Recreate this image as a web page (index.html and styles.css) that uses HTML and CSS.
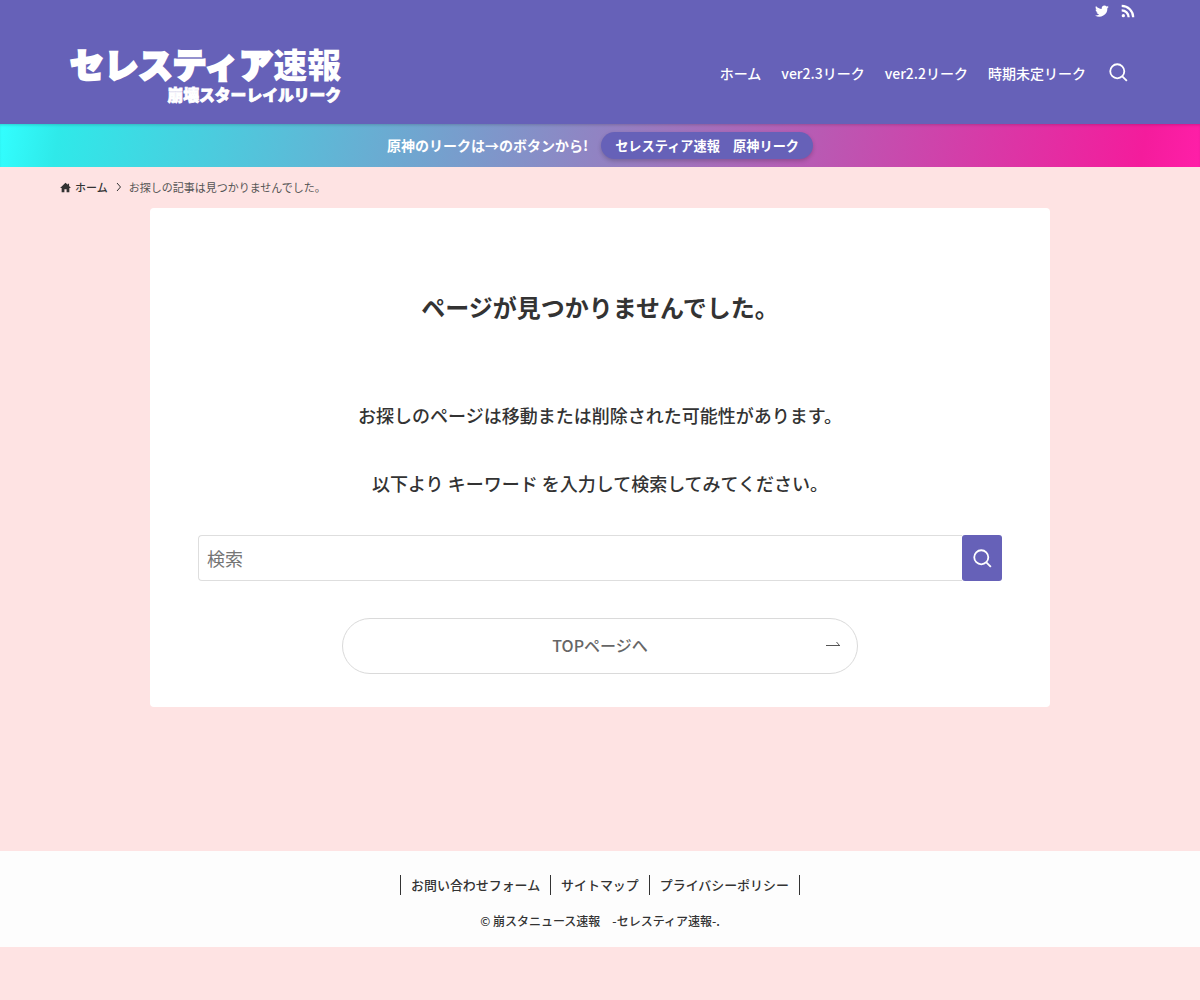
FILE: index.html
```
<!DOCTYPE html>
<html lang="ja">
<head>
    <meta charset="UTF-8">
    <meta name="viewport" content="width=device-width, initial-scale=1.0">
    <title>ページが見つかりませんでした。 | セレスティア速報</title>
    <link rel="stylesheet" href="styles.css">
</head>
<body>

    <header class="header">
        <div class="header-bar">
            <a href="#" aria-label="Twitter">
                <svg class="icon-sns" viewBox="0 0 24 24"><path d="M23.6 4.9c-.9.4-1.800.7-2.800.8 1-.6 1.800-1.600 2.100-2.700-.9.6-2 1-3.100 1.200A4.800 4.800 0 0 0 11.600 8.600C7.600 8.400 4 6.500 1.700 3.500c-1.300 2.200-.7 5.100 1.500 6.500-.8 0-1.500-.2-2.200-.6 0 2.300 1.600 4.300 3.900 4.800-.7.2-1.500.2-2.200.1.600 1.900 2.400 3.300 4.500 3.400A9.800 9.800 0 0 1 0 19.700 13.900 13.900 0 0 0 21.200 7.400c1-.7 1.800-1.500 2.400-2.500z"/></svg>
            </a>
            <a href="#" aria-label="RSS">
                <svg class="icon-sns" viewBox="0 0 24 24"><circle cx="4" cy="20" r="2.800"/><path d="M1.200 9v3.800a10 10 0 0 1 10 10H15A13.800 13.800 0 0 0 1.200 9z"/><path d="M1.200 1.200V5a17.800 17.800 0 0 1 17.800 17.800h3.800A21.600 21.600 0 0 0 1.200 1.200z"/></svg>
            </a>
        </div>
        <div class="header-inner">
            <a href="#" class="logo">
                <span class="logo-main"><span class="logo-kana">セレスティア</span>速報</span>
                <span class="logo-sub">崩壊スターレイルリーク</span>
            </a>
            <nav class="gnav">
                <a href="#">ホーム</a>
                <a href="#">ver2.3リーク</a>
                <a href="#">ver2.2リーク</a>
                <a href="#">時期未定リーク</a>
                <button type="button" class="gnav-search" aria-label="検索">
                    <svg class="icon-search" viewBox="0 0 20 20"><circle cx="8.700" cy="8.700" r="7.400"/><path d="M14 14l4.800 4.800"/></svg>
                </button>
            </nav>
        </div>
    </header>

    <!-- お知らせバー -->
    <div class="info-bar">
        <span class="info-text">原神のリークは→のボタンから!</span>
        <a href="#" class="info-btn">セレスティア速報　原神リーク</a>
    </div>

    <!-- パンくずリスト -->
    <div class="breadcrumb">
        <a href="#" class="breadcrumb-home">
            <svg class="icon-home" viewBox="0 0 12 12"><path d="M6 .8L.1 6.500h1.700v4.700h3V8h2.400v3.200h3V6.500h1.700L9.900 4.400V1.800H8.500v1.300z"/></svg>
            ホーム
        </a>
        <svg class="icon-chevron" viewBox="0 0 6 10"><path d="M1 1l3.500 4L1 9"/></svg>
        <span class="breadcrumb-current">お探しの記事は見つかりませんでした。</span>
    </div>

    <main class="content">
        <h1>ページが見つかりませんでした。</h1>
        <p>お探しのページは移動または削除された可能性があります。</p>
        <p>以下より キーワード を入力して検索してみてください。</p>
        <form class="search-form">
            <input type="text" name="s" placeholder="検索">
            <button type="submit" aria-label="検索">
                <svg class="icon-search" viewBox="0 0 20 20"><circle cx="8.700" cy="8.700" r="7.400"/><path d="M14 14l4.800 4.800"/></svg>
            </button>
        </form>
        <a href="#" class="top-btn">
            <span>TOPページへ</span>
            <svg class="icon-arrow" viewBox="0 0 14 6"><path d="M0 4.500h14M10.500 1l3 3.500"/></svg>
        </a>
    </main>

    <footer class="footer">
        <nav class="footer-nav">
            <a href="#">お問い合わせフォーム</a>
            <a href="#">サイトマップ</a>
            <a href="#">プライバシーポリシー</a>
        </nav>
        <p class="copyright">© 崩スタニュース速報　-セレスティア速報-.</p>
    </footer>

</body>
</html>
```
FILE: styles.css
```
* {
    box-sizing: border-box;
}
body {
    margin: 0;
    background-color: #fee3e3;
    color: #333;
    font-family: "Noto Sans CJK JP", sans-serif;
    font-weight: 500;
}
a {
    color: inherit;
    text-decoration: none;
}
button {
    border: none;
    padding: 0;
    cursor: pointer;
}
svg {
    display: block;
}

/* header */
.header {
    height: 124px;
    background-color: #6661b8;
    color: #fff;
}
.header-bar {
    display: flex;
    justify-content: flex-end;
    gap: 12px;
    height: 24px;
    padding: 4px 65px 0 0;
}
.icon-sns {
    width: 14px;
    height: 14px;
    fill: #fff;
}
.header-inner {
    display: flex;
    justify-content: space-between;
    height: 100px;
    padding: 0 72px 0 70px;
}
.logo {
    display: flex;
    flex-direction: column;
    align-items: flex-end;
    padding-top: 19px;
    font-weight: 900;
}
.logo-main {
    font-size: 34px;
    line-height: 42px;
    white-space: nowrap;
}
.logo-kana {
    letter-spacing: 0.2px;
    -webkit-text-stroke: 2.4px #fff;
}
.logo-sub {
    font-size: 15.8px;
    line-height: 20px;
    -webkit-text-stroke: 0.8px #fff;
}
.gnav {
    display: flex;
    align-items: center;
    gap: 20px;
    height: 97px;
    font-size: 14px;
}
.gnav-search {
    margin-left: 3px;
    background: none;
}
.icon-search {
    width: 19px;
    height: 19px;
    fill: none;
    stroke: #fff;
    stroke-width: 1.9;
}

/* info bar */
.info-bar {
    display: flex;
    justify-content: center;
    align-items: center;
    gap: 13px;
    height: 43px;
    padding-bottom: 1px;
    background: linear-gradient(100deg, #32ffff 0, #2fe9e9 5%, #f41c9c 95%, #ff1fa8 100%);
    box-shadow: inset 0 2px 3px -1px rgba(0, 0, 0, 0.18);
    color: #fff;
    font-size: 14px;
    font-weight: 700;
}
.info-btn {
    padding: 0 14px;
    border-radius: 14px;
    background-color: #6661b8;
    box-shadow: 0 2px 4px rgba(0, 0, 0, 0.2);
    font-size: 13.2px;
    line-height: 27px;
}

/* breadcrumb */
.breadcrumb {
    display: flex;
    align-items: center;
    gap: 8px;
    height: 41px;
    padding: 0 60px 1px;
    font-size: 11px;
    font-weight: 400;
}
.breadcrumb-home {
    display: flex;
    align-items: center;
    gap: 4px;
    font-weight: 500;
}
.breadcrumb-current {
    margin-left: -1px;
    color: #555;
}
.icon-home {
    width: 11px;
    height: 11px;
    fill: #333;
}
.icon-chevron {
    width: 6px;
    height: 10px;
    fill: none;
    stroke: #333;
}

/* content */
.content {
    width: 900px;
    height: 499px;
    margin: 0 auto 144px;
    padding: 80px 48px 0;
    border-radius: 4px;
    background-color: #fff;
    text-align: center;
}
.content h1 {
    margin: 0 0 73px;
    font-size: 24px;
    line-height: 38px;
}
.content p {
    margin: 0 0 36px;
    font-size: 18px;
    line-height: 32px;
}
.search-form {
    display: flex;
    height: 46px;
    margin-bottom: 37px;
}
.search-form input {
    flex: 1;
    padding: 0 8px;
    border: 1px solid #dedede;
    border-right: none;
    border-radius: 4px 0 0 4px;
    font-family: inherit;
    font-size: 18px;
}
.search-form button {
    display: flex;
    justify-content: center;
    align-items: center;
    width: 40px;
    border-radius: 3px;
    background-color: #6661b8;
}
.top-btn {
    display: grid;
    grid-template-columns: 1fr auto 1fr;
    align-items: center;
    width: 516px;
    height: 56px;
    margin: 0 auto;
    padding: 0 17px 2px;
    border: 1px solid #dadada;
    border-radius: 28px;
    color: #666;
    font-size: 16px;
}
.top-btn span {
    grid-column: 2;
}
.icon-arrow {
    justify-self: end;
    width: 14px;
    height: 6px;
    margin-bottom: 2px;
    fill: none;
    stroke: #555;
}

/* footer */
.footer {
    height: 96px;
    padding-top: 24px;
    background-color: #fdfdfd;
    text-align: center;
}
.footer-nav {
    display: flex;
    justify-content: center;
    font-size: 12.95px;
    line-height: 20px;
}
.footer-nav a {
    padding: 0 10px;
    border-right: 1px solid #333;
}
.footer-nav a:first-child {
    border-left: 1px solid #333;
}
.copyright {
    margin: 16px 0 0;
    font-size: 12px;
    line-height: 20px;
}
```
